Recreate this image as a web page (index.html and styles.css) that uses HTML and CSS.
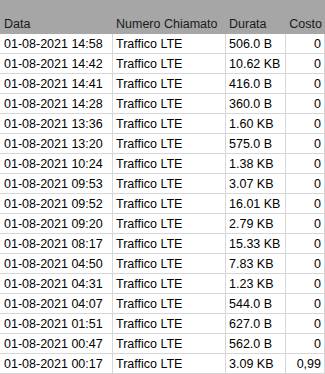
FILE: index.html
```html
<!DOCTYPE html>
<html>
<head>
<meta charset="utf-8">
<link rel="stylesheet" href="styles.css">
</head>
<body>
<div class="sheet">
  <div class="row head">
    <div class="cell">Data</div>
    <div class="cell">Numero Chiamato</div>
    <div class="cell">Durata</div>
    <div class="cell num">Costo</div>
  </div>
  <div class="row"><div class="cell">01-08-2021 14:58</div><div class="cell">Traffico LTE</div><div class="cell">506.0 B</div><div class="cell num">0</div></div>
  <div class="row"><div class="cell">01-08-2021 14:42</div><div class="cell">Traffico LTE</div><div class="cell">10.62 KB</div><div class="cell num">0</div></div>
  <div class="row"><div class="cell">01-08-2021 14:41</div><div class="cell">Traffico LTE</div><div class="cell">416.0 B</div><div class="cell num">0</div></div>
  <div class="row"><div class="cell">01-08-2021 14:28</div><div class="cell">Traffico LTE</div><div class="cell">360.0 B</div><div class="cell num">0</div></div>
  <div class="row"><div class="cell">01-08-2021 13:36</div><div class="cell">Traffico LTE</div><div class="cell">1.60 KB</div><div class="cell num">0</div></div>
  <div class="row"><div class="cell">01-08-2021 13:20</div><div class="cell">Traffico LTE</div><div class="cell">575.0 B</div><div class="cell num">0</div></div>
  <div class="row"><div class="cell">01-08-2021 10:24</div><div class="cell">Traffico LTE</div><div class="cell">1.38 KB</div><div class="cell num">0</div></div>
  <div class="row"><div class="cell">01-08-2021 09:53</div><div class="cell">Traffico LTE</div><div class="cell">3.07 KB</div><div class="cell num">0</div></div>
  <div class="row"><div class="cell">01-08-2021 09:52</div><div class="cell">Traffico LTE</div><div class="cell">16.01 KB</div><div class="cell num">0</div></div>
  <div class="row"><div class="cell">01-08-2021 09:20</div><div class="cell">Traffico LTE</div><div class="cell">2.79 KB</div><div class="cell num">0</div></div>
  <div class="row"><div class="cell">01-08-2021 08:17</div><div class="cell">Traffico LTE</div><div class="cell">15.33 KB</div><div class="cell num">0</div></div>
  <div class="row"><div class="cell">01-08-2021 04:50</div><div class="cell">Traffico LTE</div><div class="cell">7.83 KB</div><div class="cell num">0</div></div>
  <div class="row"><div class="cell">01-08-2021 04:31</div><div class="cell">Traffico LTE</div><div class="cell">1.23 KB</div><div class="cell num">0</div></div>
  <div class="row"><div class="cell">01-08-2021 04:07</div><div class="cell">Traffico LTE</div><div class="cell">544.0 B</div><div class="cell num">0</div></div>
  <div class="row"><div class="cell">01-08-2021 01:51</div><div class="cell">Traffico LTE</div><div class="cell">627.0 B</div><div class="cell num">0</div></div>
  <div class="row"><div class="cell">01-08-2021 00:47</div><div class="cell">Traffico LTE</div><div class="cell">562.0 B</div><div class="cell num">0</div></div>
  <div class="row"><div class="cell">01-08-2021 00:17</div><div class="cell">Traffico LTE</div><div class="cell">3.09 KB</div><div class="cell num">0,99</div></div>
</div>
</body>
</html>
```

FILE: styles.css
```css
html, body {
  margin: 0;
  padding: 0;
  background: #ffffff;
}
.sheet {
  width: 325px;
  font-family: "Liberation Sans", Arial, sans-serif;
  font-size: 12.5px;
  color: #000000;
}
.row {
  display: grid;
  grid-template-columns: 113px 113px 60px 39px;
  height: 20px;
}
.cell {
  box-sizing: border-box;
  border-right: 1px solid #d6d6d6;
  border-bottom: 1px solid #d6d6d6;
  padding: 1px 3px 0 4px;
  line-height: 19px;
  white-space: nowrap;
  overflow: hidden;
}
.cell:nth-child(2),
.cell:nth-child(3) {
  padding-left: 3px;
}
.num {
  text-align: right;
}
.head {
  height: 34px;
  background: #a6a6a6;
}
.head .cell {
  border: none;
  color: #1a1a1a;
  display: flex;
  align-items: flex-end;
  padding-bottom: 0;
}
.head .cell.num {
  justify-content: flex-end;
}
```
